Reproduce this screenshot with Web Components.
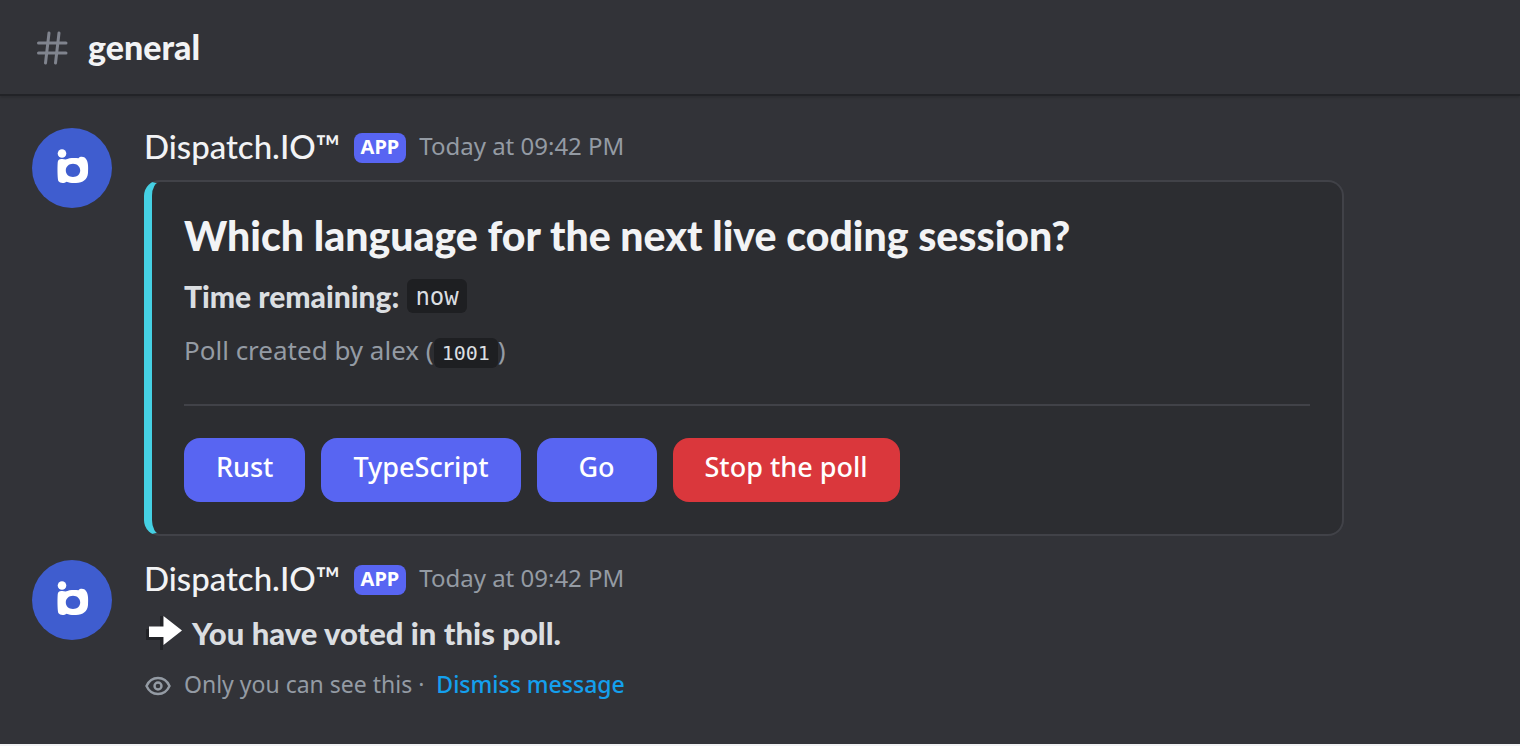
<!DOCTYPE html>
<html lang="en">
<head>
<meta charset="UTF-8">
<title>general</title>
<style>
  body {
    margin: 0;
    background: #f2f3f5;
    color: #dbdee1;
    font-family: "Noto Sans", sans-serif;
  }
</style>
</head>
<body>
<chat-channel name="general">
  <chat-message author="Dispatch.IO™" time="Today at 09:42 PM">
    <poll-card>
      <span slot="title">Which language for the next live coding session?</span>
      <inline-code slot="remaining">now</inline-code>
      <span slot="creator">Poll created by alex (<inline-code small>1001</inline-code>)</span>
      <poll-button slot="actions">Rust</poll-button>
      <poll-button slot="actions">TypeScript</poll-button>
      <poll-button slot="actions">Go</poll-button>
      <poll-button slot="actions" variant="danger">Stop the poll</poll-button>
    </poll-card>
  </chat-message>
  <chat-message author="Dispatch.IO™" time="Today at 09:42 PM">
    <vote-notice>You have voted in this poll.</vote-notice>
  </chat-message>
</chat-channel>

<script>
class ChatChannel extends HTMLElement {
  constructor() {
    super();
    this.attachShadow({ mode: 'open' });
  }

  connectedCallback() {
    this.shadowRoot.innerHTML = `
      <style>
        :host {
          display: block;
          min-height: calc(100vh - 2px);
          background: #323338;
        }

        header {
          display: flex;
          align-items: center;
          gap: 16px;
          height: 94px;
          padding: 0 32px;
          border-bottom: 2px solid #222327;
          box-shadow: 0 2px 2px rgba(0, 0, 0, 0.12);
        }

        svg {
          width: 40px;
          height: 40px;
          stroke: #80848e;
          stroke-width: 3;
          stroke-linecap: round;
          fill: none;
        }

        h1 {
          margin: 0;
          font-family: Lato, sans-serif;
          font-size: 34px;
          line-height: 40px;
          font-weight: 900;
          color: #f2f3f5;
        }

        main {
          display: flex;
          flex-direction: column;
          gap: 24px;
          padding: 32px;
        }
      </style>
      <header>
        <svg viewBox="0 0 40 40" aria-hidden="true">
          <path d="M17 6 13.500 36M27 6 23.500 36M6.500 16H34M6.500 26H34"/>
        </svg>
        <h1>${this.getAttribute('name')}</h1>
      </header>
      <main><slot></slot></main>
    `;
  }
}
customElements.define('chat-channel', ChatChannel);

class BotAvatar extends HTMLElement {
  constructor() {
    super();
    this.attachShadow({ mode: 'open' });
  }

  connectedCallback() {
    this.shadowRoot.innerHTML = `
      <style>
        :host {
          display: block;
          flex: none;
          width: 80px;
          height: 80px;
        }

        svg {
          display: block;
        }
      </style>
      <svg width="80" height="80" viewBox="0 0 80 80" aria-hidden="true">
        <circle cx="40" cy="40" r="40" fill="#3f5dcf"/>
        <circle cx="30" cy="25.500" r="4.300" fill="#fff"/>
        <path fill="#fff" fill-rule="evenodd" d="M28 31.300C30 30.600 32 31 33.500 31.600C37 29.800 42 29.700 46.500 30.200C48 28.300 52.500 28.300 54 31C56.500 34 56.300 40 56 45C55.500 51.500 51 54.700 44 54.900C40 55.200 37 54.500 34.500 53.700C32.500 55.300 28 55.600 26.300 53C25.200 49 25.400 36 25.800 33.700C26.100 32.400 27 31.700 28 31.300ZM41 35.700C36.800 35.700 33.800 38.600 33.800 42.400C33.800 46.100 36.800 48.900 41 48.900C45.200 48.900 48.200 46.100 48.200 42.400C48.200 38.600 45.200 35.700 41 35.700Z"/>
      </svg>
    `;
  }
}
customElements.define('bot-avatar', BotAvatar);

class ChatMessage extends HTMLElement {
  constructor() {
    super();
    this.attachShadow({ mode: 'open' });
  }

  connectedCallback() {
    this.shadowRoot.innerHTML = `
      <style>
        :host {
          display: block;
        }

        article {
          display: flex;
          gap: 32px;
        }

        .body {
          flex: 1;
          min-width: 0;
          max-width: 1200px;
        }

        .meta {
          display: flex;
          align-items: center;
          gap: 13px;
          height: 40px;
          margin-bottom: 12px;
        }

        .author {
          padding-bottom: 4px;
          font-family: Lato, sans-serif;
          font-size: 33px;
          line-height: 36px;
          font-weight: 500;
          color: #f2f3f5;
        }

        .tag {
          padding: 0 7px 2px;
          border-radius: 8px;
          background: #5865f2;
          color: #fff;
          font-size: 20px;
          line-height: 28px;
          font-weight: 700;
        }

        time {
          padding-bottom: 4px;
          font-size: 24px;
          line-height: 36px;
          color: #949ba4;
        }
      </style>
      <article>
        <bot-avatar></bot-avatar>
        <div class="body">
          <div class="meta">
            <span class="author">${this.getAttribute('author')}</span>
            <span class="tag">APP</span>
            <time>${this.getAttribute('time')}</time>
          </div>
          <slot></slot>
        </div>
      </article>
    `;
  }
}
customElements.define('chat-message', ChatMessage);

class InlineCode extends HTMLElement {
  constructor() {
    super();
    this.attachShadow({ mode: 'open' });
  }

  connectedCallback() {
    this.shadowRoot.innerHTML = `
      <style>
        :host {
          display: inline-block;
        }

        code {
          display: block;
          padding: 2px 8px 0;
          border-radius: 6px;
          background: #1e1f22;
          color: #dbdee1;
          font-family: "DejaVu Sans Mono", monospace;
          font-size: 24px;
          line-height: 32px;
          font-weight: 400;
        }

        :host([small]) code {
          padding-top: 0;
          font-size: 20px;
          line-height: 30px;
        }
      </style>
      <code><slot></slot></code>
    `;
  }
}
customElements.define('inline-code', InlineCode);

class PollButton extends HTMLElement {
  constructor() {
    super();
    this.attachShadow({ mode: 'open' });
  }

  connectedCallback() {
    this.shadowRoot.innerHTML = `
      <style>
        :host {
          display: block;
        }

        button {
          display: block;
          min-width: 120px;
          height: 64px;
          padding: 0 32px 8px;
          border: none;
          border-radius: 16px;
          background: #5865f2;
          color: #fff;
          font-family: "Noto Sans", sans-serif;
          font-size: 27px;
          font-weight: 500;
          cursor: pointer;
        }

        button:hover {
          background: #4752c4;
        }

        :host([variant="danger"]) button {
          background: #da373c;
        }

        :host([variant="danger"]) button:hover {
          background: #a12828;
        }
      </style>
      <button type="button"><slot></slot></button>
    `;
  }
}
customElements.define('poll-button', PollButton);

class PollCard extends HTMLElement {
  constructor() {
    super();
    this.attachShadow({ mode: 'open' });
  }

  connectedCallback() {
    this.shadowRoot.innerHTML = `
      <style>
        :host {
          display: block;
        }

        section {
          padding: 30px 32px 32px;
          border: 2px solid #414248;
          border-left: 8px solid #45d0e3;
          border-radius: 16px;
          background: #2c2d31;
        }

        h2 {
          margin: 0 0 16px;
          font-family: Lato, sans-serif;
          font-size: 41px;
          line-height: 48px;
          font-weight: 900;
          color: #f2f3f5;
        }

        p {
          margin: 0;
        }

        .remaining {
          display: flex;
          align-items: center;
          gap: 8px;
          height: 40px;
          font-family: Lato, sans-serif;
          font-size: 30px;
          font-weight: 900;
        }

        .creator {
          margin-top: 16px;
          font-size: 26px;
          line-height: 36px;
          color: #949ba4;
        }

        hr {
          height: 2px;
          margin: 36px 0 32px;
          border: none;
          background: #414248;
        }

        .actions {
          display: flex;
          flex-wrap: wrap;
          gap: 16px;
        }
      </style>
      <section>
        <h2><slot name="title"></slot></h2>
        <p class="remaining"><strong>Time remaining:</strong><slot name="remaining"></slot></p>
        <p class="creator"><slot name="creator"></slot></p>
        <hr>
        <div class="actions"><slot name="actions"></slot></div>
      </section>
    `;
  }
}
customElements.define('poll-card', PollCard);

class VoteNotice extends HTMLElement {
  constructor() {
    super();
    this.attachShadow({ mode: 'open' });
  }

  connectedCallback() {
    this.shadowRoot.innerHTML = `
      <style>
        :host {
          display: block;
        }

        p {
          display: flex;
          align-items: center;
          margin: 0;
        }

        .text {
          gap: 8px;
          height: 42px;
          font-family: Lato, sans-serif;
          font-size: 31px;
          font-weight: 900;
        }

        .hint {
          gap: 12px;
          height: 36px;
          margin-top: 14px;
          font-size: 23px;
          line-height: 32px;
          color: #949ba4;
        }

        .hint span {
          padding-bottom: 4px;
        }

        svg {
          flex: none;
        }

        a {
          color: #14a0ee;
          font-weight: 500;
          text-decoration: none;
        }

        a:hover {
          text-decoration: underline;
        }
      </style>
      <p class="text">
        <svg width="40" height="40" viewBox="0 0 40 40" aria-hidden="true">
          <path fill="#222327" d="M2 16H16V3H19V37H16V27H2Z"/>
          <path fill="#fff" d="M5 13.500H19.500V3L38 17.500L19.500 32V24H5Z"/>
        </svg>
        <strong><slot></slot></strong>
      </p>
      <p class="hint">
        <svg width="28" height="28" viewBox="0 0 28 28" fill="none" stroke="#949ba4" stroke-width="2.400" aria-hidden="true">
          <path d="M2.500 14C5 8.500 9 6 14 6S23 8.500 25.500 14C23 19.500 19 22 14 22S5 19.500 2.500 14Z"/>
          <circle cx="14" cy="14" r="3.500"/>
        </svg>
        <span>Only you can see this ·&nbsp; <a href="#">Dismiss message</a></span>
      </p>
    `;

    this.shadowRoot.querySelector('a').addEventListener('click', (event) => {
      event.preventDefault();
      this.closest('chat-message').remove();
    });
  }
}
customElements.define('vote-notice', VoteNotice);
</script>
</body>
</html>
